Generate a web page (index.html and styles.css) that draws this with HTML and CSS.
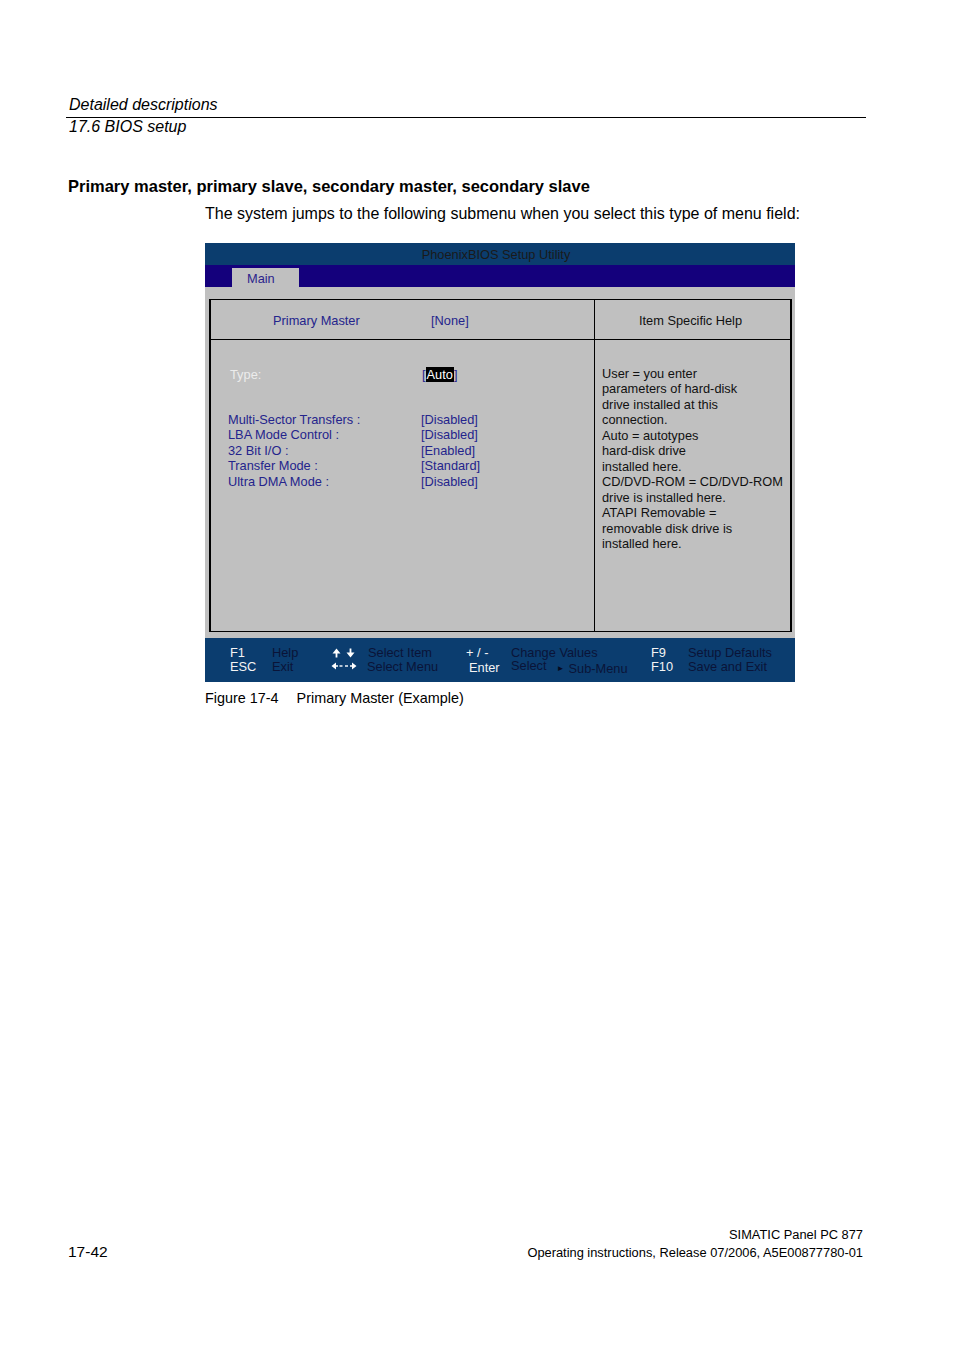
FILE: index.html
```html
<!DOCTYPE html>
<html lang="en">
<head>
<meta charset="utf-8">
<title>17.6 BIOS setup</title>
<link rel="stylesheet" href="styles.css">
</head>
<body>
<div class="page">
  <div class="running-head">
    <div class="rh-top">Detailed descriptions</div>
    <div class="rh-sub">17.6 BIOS setup</div>
  </div>

  <h2 class="heading">Primary master, primary slave, secondary master, secondary slave</h2>
  <p class="intro">The system jumps to the following submenu when you select this type of menu field:</p>

  <div class="bios">
    <div class="bios-title">PhoenixBIOS Setup Utility</div>
    <div class="bios-menu"><div class="tab">Main</div></div>
    <div class="bios-body">
      <div class="frame">
        <div class="cell head-left">
          <span class="hl-label">Primary Master</span>
          <span class="hl-value">[None]</span>
        </div>
        <div class="cell head-right">Item Specific Help</div>
        <div class="cell body-left">
          <div class="row type-row">
            <span class="lbl type-lbl">Type:</span>
            <span class="val type-val">[<span class="sel">Auto</span>]</span>
          </div>
          <div class="opts">
            <div class="row"><span class="lbl">Multi-Sector Transfers :</span><span class="val">[Disabled]</span></div>
            <div class="row"><span class="lbl">LBA Mode Control :</span><span class="val">[Disabled]</span></div>
            <div class="row"><span class="lbl">32 Bit I/O :</span><span class="val">[Enabled]</span></div>
            <div class="row"><span class="lbl">Transfer Mode :</span><span class="val">[Standard]</span></div>
            <div class="row"><span class="lbl">Ultra DMA Mode :</span><span class="val">[Disabled]</span></div>
          </div>
        </div>
        <div class="cell body-right">
          User = you enter<br>
          parameters of hard-disk<br>
          drive installed at this<br>
          connection.<br>
          Auto = autotypes<br>
          hard-disk drive<br>
          installed here.<br>
          CD/DVD-ROM = CD/DVD-ROM<br>
          drive is installed here.<br>
          ATAPI Removable =<br>
          removable disk drive is<br>
          installed here.
        </div>
      </div>
    </div>
    <div class="bios-foot">
      <div class="fcol k1 key"><span>F1</span><span>ESC</span></div>
      <div class="fcol d1 desc"><span>Help</span><span>Exit</span></div>
      <div class="fcol k2 key">
        <span class="arrows">
          <svg width="9" height="10" viewBox="0 0 9 10"><path d="M4.5 0.5 L8.5 5.5 L5.4 5.5 L5.4 9.5 L3.6 9.5 L3.6 5.5 L0.5 5.5 Z" fill="#fff"/></svg>
          <svg width="9" height="10" viewBox="0 0 9 10"><path d="M3.6 0.5 L5.4 0.5 L5.4 4.5 L8.5 4.5 L4.5 9.5 L0.5 4.5 L3.6 4.5 Z" fill="#fff"/></svg>
        </span>
        <span class="arrows">
          <svg width="13" height="8" viewBox="0 0 13 8"><path d="M0.5 4 L5 0.5 L5 3.2 L7 3.2 L7 4.8 L5 4.8 L5 7.5 Z" fill="#fff"/><rect x="8.5" y="3.3" width="3" height="1.4" fill="#fff"/></svg>
          <svg width="13" height="8" viewBox="0 0 13 8"><rect x="1" y="3.3" width="3" height="1.4" fill="#fff"/><path d="M12.5 4 L8 0.5 L8 3.2 L6 3.2 L6 4.8 L8 4.8 L8 7.5 Z" fill="#fff"/></svg>
        </span>
      </div>
      <div class="fcol d2 desc"><span>Select Item</span><span class="shift-l">Select Menu</span></div>
      <div class="fcol k3 key"><span>+ / -</span><span class="enter">Enter</span></div>
      <div class="fcol d3 desc"><span>Change Values</span><span class="submenu"><span class="sel-word">Select</span><span class="tri">&#9658;</span><span class="sub-word">Sub-Menu</span></span></div>
      <div class="fcol k4 key"><span>F9</span><span>F10</span></div>
      <div class="fcol d4 desc"><span>Setup Defaults</span><span>Save and Exit</span></div>
    </div>
  </div>

  <p class="caption"><span class="fig-no">Figure 17-4</span><span>Primary Master (Example)</span></p>

  <div class="page-foot">
    <div class="page-no">17-42</div>
    <div class="doc-info">
      <div>SIMATIC Panel PC 877</div>
      <div>Operating instructions, Release 07/2006, A5E00877780-01</div>
    </div>
  </div>
</div>
</body>
</html>
```

FILE: styles.css
```css
* { box-sizing: border-box; }

html, body {
  margin: 0;
  padding: 0;
  background: #fff;
}

body {
  font-family: "Liberation Sans", Arial, sans-serif;
  color: #000;
}

.page {
  width: 954px;
  min-height: 1351px;
  overflow: hidden;
}

/* running head */
.running-head {
  margin: 0 88px 0 66px;
  padding-top: 96px;
  font-style: italic;
  font-size: 16px;
}
.rh-top {
  line-height: 18px;
  padding-left: 3px;
  padding-bottom: 3px;
  border-bottom: 1px solid #000;
}
.rh-sub {
  line-height: 18px;
  padding-left: 3px;
}

.heading {
  margin: 40px 0 0 68px;
  font-size: 16.5px;
  line-height: 20px;
  font-weight: bold;
}

.intro {
  margin: 9px 0 0 205px;
  font-size: 16px;
  line-height: 18px;
}

/* BIOS screen */
.bios {
  margin: 20px 0 0 205px;
  width: 590px;
  font-size: 12.8px;
}
.bios-title {
  height: 22px;
  line-height: 24px;
  background: #0b3d6e;
  color: #1a1a1a;
  text-align: center;
  padding-right: 8px;
}
.bios-menu {
  height: 22px;
  background: #14007c;
  padding: 3px 0 0 27px;
}
.tab {
  width: 67px;
  height: 19px;
  background: #c0c0c0;
  color: #2b1f8c;
  line-height: 21px;
  padding-left: 15px;
}
.bios-body {
  background: #c0c0c0;
  padding: 12px 3px 6px 4px;
}
.frame {
  display: grid;
  grid-template-columns: 383px 195px;
  grid-template-rows: 39px 291px;
  column-gap: 1px;
  row-gap: 1px;
  border-top: 1px solid #000;
  border-bottom: 1px solid #000;
  border-left: 2px solid #000;
  border-right: 2px solid #000;
  background: #000;
}
.cell {
  background: #c0c0c0;
}
.head-left {
  display: flex;
  align-items: center;
  color: #24248c;
  padding-top: 1px;
}
.hl-label { margin-left: 62px; width: 158px; }
.head-right {
  display: flex;
  align-items: center;
  justify-content: center;
  padding: 1px 4px 0 0;
  color: #111;
}
.body-left {
  color: #24248c;
  padding-top: 27px;
}
.row {
  display: flex;
  line-height: 15.6px;
}
.lbl {
  width: 193px;
  margin-left: 17px;
}
.type-lbl {
  color: #ececec;
  margin-left: 19px;
  width: 192px;
}
.sel {
  background: #000;
  color: #fff;
  padding: 0 1px;
}
.opts {
  margin-top: 29px;
}
.body-right {
  color: #111;
  line-height: 15.45px;
  padding: 26px 0 0 7px;
}

/* footer bar */
.bios-foot {
  height: 44px;
  background: #0b3d6f;
  display: flex;
  padding: 8px 0 0 25px;
  line-height: 13.5px;
  font-size: 12.8px;
}
.fcol {
  display: flex;
  flex-direction: column;
}
.key { color: #f4f4f4; }
.desc { color: #0a1438; }
.k1 { width: 42px; }
.d1 { width: 60px; }
.k2 { width: 36px; }
.d2 { width: 98px; }
.k3 { width: 45px; }
.d3 { width: 140px; }
.k4 { width: 37px; }
.d4 { flex: 1; }
.arrows {
  display: flex;
  align-items: center;
  gap: 5px;
  height: 13.5px;
}
.arrows svg { display: block; }
.arrows + .arrows { gap: 0; margin-left: -1px; }
.shift-l { margin-left: -1px; }
.enter { margin: 1px 0 0 3px; }
.submenu { display: flex; align-items: flex-start; }
.sel-word { margin-top: -1px; }
.tri {
  font-size: 8px;
  color: #050a20;
  margin: 2px 4px 0 10px;
}
.sub-word { margin-top: 2px; }

.caption {
  margin: 7px 0 0 205px;
  font-size: 14.4px;
  line-height: 18px;
}
.fig-no { margin-right: 18px; }

/* page footer */
.page-foot {
  margin: 519px 91px 0 68px;
  display: flex;
  justify-content: space-between;
  align-items: flex-end;
}
.page-no {
  font-size: 15.5px;
  line-height: 18px;
  margin-bottom: 1px;
}
.doc-info {
  text-align: right;
  font-size: 12.85px;
  line-height: 18px;
}
```
